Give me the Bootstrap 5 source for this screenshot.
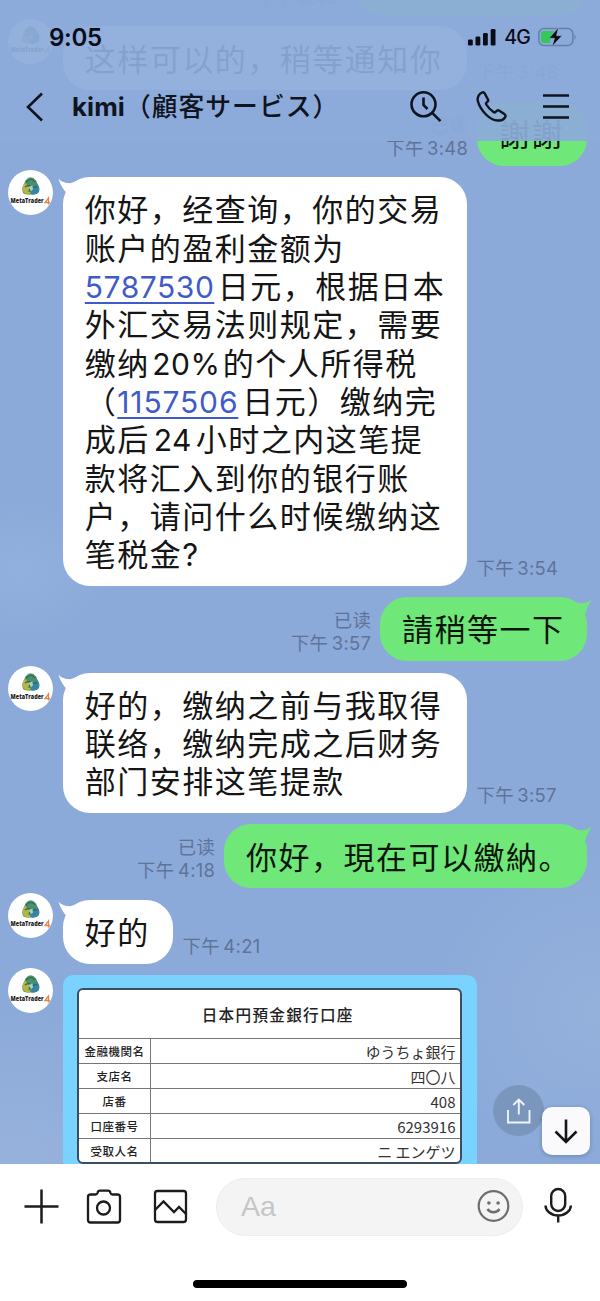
<!DOCTYPE html>
<html lang="zh">
<head>
<meta charset="utf-8">
<meta name="viewport" content="width=device-width, initial-scale=1">
<title>kimi（顧客サービス）</title>
<link href="https://cdn.jsdelivr.net/npm/bootstrap@5.3.0/dist/css/bootstrap.min.css" rel="stylesheet">
<style>
body{width:600px;height:1301px;background:#fff;font-family:Inter,"Noto Sans CJK SC",sans-serif;color:#151515}
svg{display:block;flex:none}
.screen{width:600px;height:1301px}
.chat{height:1164px;background:
 radial-gradient(ellipse 90px 70px at 20px 570px,rgba(150,182,224,.55),transparent),
 radial-gradient(ellipse 150px 160px at 20px 1170px,rgba(156,182,222,.7),transparent),
 radial-gradient(ellipse 170px 160px at 600px 1010px,rgba(154,182,222,.6),transparent),#8caad9}
.feed{margin-top:-49px;gap:11.4px}
.head{height:141px;background:rgba(140,170,217,.935)}
.statusbar{height:74px;padding:0 23px 0 49px}
.clock{font-size:24px;font-weight:600;color:#0a0d18;letter-spacing:-.3px;padding-top:2px}
.net{font-size:19.5px;font-weight:500;color:#0a0d18;letter-spacing:-.8px;padding-top:1px}
.titlebar{height:66px}
.title{font-family:Inter,"Noto Sans CJK JP",sans-serif;font-size:25.8px;color:#101420;font-weight:500;letter-spacing:1px;white-space:nowrap}
.title b{font-weight:700;letter-spacing:.1px}
.in-row{padding-left:62.5px}
.out-row{padding-right:13.3px}
.bubble{border-radius:27px;min-height:64px;font-size:31px;line-height:38.3px;letter-spacing:1.5px;white-space:nowrap;padding:14.3px 0 11.3px 22.3px}
.bubble.in{background:#fff}
.bubble.out{background:#6fe879;color:#0c150c}
.bubble p{margin:0;height:38.3px}
.tail{position:absolute;top:1px}
.in .tail{left:-5px}
.out .tail{right:-5px}
.n{display:inline-block;letter-spacing:.55px;font-size:30px}
.n.link{color:#3f5bc8;text-decoration:underline;text-decoration-thickness:2px;text-underline-offset:4px}
.n.wide{letter-spacing:.85px}
.avatar{position:absolute;left:8px;top:-7px}
.stamp{font-size:18.4px;line-height:23px;color:#5f7399;white-space:nowrap;letter-spacing:.3px;word-spacing:-2px;position:relative}
.in-row .stamp{margin-left:10px;padding-bottom:6px}
.out-row .stamp{margin-right:8.500px;padding-bottom:6px}
.slip{width:414px;height:210px;background:#7ad2ff;border-radius:10px 10px 0 0;padding:12.6px 15px 0 14.5px}
.sheet{height:176px;border:2.5px solid #3b4d60;border-radius:6px;background:#fff;font-family:"Noto Sans CJK JP",sans-serif;color:#222}
.sheet h6{height:48.2px;margin:0;font-size:15.6px;letter-spacing:1.3px;font-weight:500;padding:0 0 0 17px}
.line{border-top:1.3px solid #777;height:24.9px}
.line .k{width:72px;border-right:1.3px solid #777;font-size:11.5px;font-weight:500;letter-spacing:.5px;padding-top:2px}
.line .v{font-size:15px;padding:3px 4px 0 0;color:#333}
.share{position:absolute;left:493px;top:1085px;width:51px;height:51px;background:#7a96bd}
.down{position:absolute;left:542px;top:1107px;width:48px;height:48px;border-radius:10px;background:#fafafc;box-shadow:0 1px 4px rgba(40,60,100,.35)}
.foot{height:137px}
.tools{height:85px;padding-left:24px}
.field{width:307px;height:58px;background:#f4f4f4;border:1px solid #ededed;padding:0 12px 0 24px;margin-left:28px}
.field span{font-family:"Liberation Sans",Arial,sans-serif;font-size:28.5px;color:#c5c6c8}
.homebar{width:214px;height:8px;margin-top:31px}
</style>
</head>
<body>
<svg width="0" height="0" class="position-absolute">
 <symbol id="logo" viewBox="0 0 45 45">
  <circle cx="22.500" cy="22.500" r="22.500" fill="#fff"/>
  <path d="M17.500 10.500Q22.500 4 28 10.500L31 17q1.500 7-5 7.500h-7q-6-.500-4.500-7z" fill="#4c8f69"/>
  <path d="M17 12.500q-4 5-1.500 10 3 3 7 1.500l-1-6z" fill="#b5b545"/>
  <path d="M24 17l5-3q4 4 1.500 8.500-3 3-8 1.500z" fill="#3485a8"/>
  <path d="M18 12q5-5 9 0M17 17q6-4 8 4M21 22q0-6 8-5" fill="none" stroke="#246a55" stroke-width="1.200"/>
  <path d="M20.500 17l4-1.500.5 4.500-2 1z" fill="#a9d0bd"/>
  <text x="2.600" y="33" font-family="Open Sans" font-weight="800" font-size="6.600" textLength="33" lengthAdjust="spacingAndGlyphs" fill="#222">MetaTrader</text>
  <path d="M40.500 34.500v-6.500l-3.500 4.500h5" fill="none" stroke="#e98245" stroke-width="1.300"/>
 </symbol>
 <symbol id="tl" viewBox="0 0 24 18"><path d="M.5.800Q3 4 7.500 4.800T14 4.800Q18 4 23 .800L14 18 8.500 15Q3 9 .5.800Z" fill="#fff"/></symbol>
 <symbol id="tr" viewBox="0 0 24 18"><path d="M23.500 1.500Q21 4.300 16.500 5T10 5Q6 4 1 .800L10 18l7-2Q19 9 23.500 1.500Z" fill="#6fe879"/></symbol>
</svg>
<div class="screen position-relative overflow-hidden">
 <main class="chat overflow-hidden">
  <div class="feed d-flex flex-column">
   <div class="out-row d-flex justify-content-end align-items-end"><div class="stamp me-2 pe-2">下午 3:48</div><div class="bubble out" style="width:232px"></div></div>
   <div class="in-row d-flex align-items-end position-relative"><svg class="avatar" width="45" height="45"><use href="#logo"/></svg><div class="bubble in" style="width:404px">这样可以的，稍等通知你</div><div class="stamp">下午 3:48</div></div>
   <div class="out-row d-flex justify-content-end align-items-end"><div class="stamp text-end">已读<br>下午 3:48</div><div class="bubble out" style="width:110px">謝謝</div></div>
   <div class="in-row d-flex align-items-end position-relative"><svg class="avatar" width="45" height="45"><use href="#logo"/></svg>
    <div class="bubble in position-relative" style="width:404px"><svg class="tail" width="24" height="18"><use href="#tl"/></svg>
     <p>你好，经查询，你的交易</p><p>账户的盈利金额为</p><p><span class="n link" style="width:129px">5787530</span><span class="ps-1">日元，根据日本</span></p><p>外汇交易法则规定，需要</p><p>缴纳<span class="n text-center" style="width:73px">20%</span>的个人所得税</p><p>（<span class="n link wide" style="width:121px">1157506</span><span class="ps-1">日元）缴纳完</span></p><p>成后<span class="n text-center" style="width:46px">24</span>小时之内这笔提</p><p>款将汇入到你的银行账</p><p>户，请问什么时候缴纳这</p><p>笔税金?</p>
    </div><div class="stamp">下午 3:54</div></div>
   <div class="out-row d-flex justify-content-end align-items-end"><div class="stamp text-end">已读<br>下午 3:57</div><div class="bubble out position-relative" style="width:207px"><svg class="tail" width="24" height="18"><use href="#tr"/></svg>請稍等一下</div></div>
   <div class="in-row d-flex align-items-end position-relative"><svg class="avatar" width="45" height="45"><use href="#logo"/></svg>
    <div class="bubble in position-relative" style="width:404px"><svg class="tail" width="24" height="18"><use href="#tl"/></svg><p>好的，缴纳之前与我取得</p><p>联络，缴纳完成之后财务</p><p>部门安排这笔提款</p></div><div class="stamp">下午 3:57</div></div>
   <div class="out-row d-flex justify-content-end align-items-end"><div class="stamp text-end">已读<br>下午 4:18</div><div class="bubble out position-relative" style="width:363px"><svg class="tail" width="24" height="18"><use href="#tr"/></svg>你好，現在可以繳納。</div></div>
   <div class="in-row d-flex align-items-end position-relative"><svg class="avatar" width="45" height="45"><use href="#logo"/></svg>
    <div class="bubble in position-relative" style="width:110px"><svg class="tail" width="24" height="18"><use href="#tl"/></svg>好的</div><div class="stamp">下午 4:21</div></div>
   <div class="in-row position-relative"><svg class="avatar" width="45" height="45"><use href="#logo"/></svg>
    <div class="slip"><div class="sheet overflow-hidden">
     <h6 class="d-flex align-items-center justify-content-center">日本円預金銀行口座</h6>
     <div class="line d-flex"><div class="k d-flex align-items-center justify-content-center">金融機関名</div><div class="v flex-fill d-flex align-items-center justify-content-end">ゆうちょ銀行</div></div>
     <div class="line d-flex"><div class="k d-flex align-items-center justify-content-center">支店名</div><div class="v flex-fill d-flex align-items-center justify-content-end">四〇八</div></div>
     <div class="line d-flex"><div class="k d-flex align-items-center justify-content-center">店番</div><div class="v flex-fill d-flex align-items-center justify-content-end">408</div></div>
     <div class="line d-flex"><div class="k d-flex align-items-center justify-content-center">口座番号</div><div class="v flex-fill d-flex align-items-center justify-content-end">6293916</div></div>
     <div class="line d-flex"><div class="k d-flex align-items-center justify-content-center">受取人名</div><div class="v flex-fill d-flex align-items-center justify-content-end">ニ エンゲツ</div></div>
    </div></div></div>
  </div>
 </main>
 <header class="head position-absolute top-0 start-0 w-100">
  <div class="statusbar d-flex align-items-center"><span class="clock me-auto">9:05</span>
   <svg width="28" height="18" class="me-2" fill="#0a0d18"><rect y="11.500" width="4.800" height="6" rx="1.200"/><rect x="7.500" y="8.500" width="4.800" height="9" rx="1.200"/><rect x="15" y="5" width="4.800" height="12.500" rx="1.200"/><rect x="22.700" y="1" width="4.800" height="16.500" rx="1.200"/></svg>
   <span class="net me-2">4G</span>
   <svg width="39" height="20"><rect x=".8" y="1.500" width="34" height="17" rx="5" fill="none" stroke="#6580ab" stroke-width="1.500"/><path d="M5 4h11l-3 6-1 6H5q-2 0-2-2V6q0-2 2-2z" fill="#35c759"/><path d="M36.500 7q2.500 3 0 6z" fill="#6580ab"/><path d="M20.500.500L11 11.300h5.500L14 19.500 24 8.700h-5.500z" fill="#0a0d18" stroke="#93b1da" stroke-width=".6"/></svg>
  </div>
  <div class="titlebar d-flex align-items-center ps-4">
   <svg width="20" height="30" fill="none" stroke="#101420" stroke-width="2.600"><path d="M18 1.500L4 15l14 13.500"/></svg>
   <span class="title ms-4 ps-1 me-auto"><b>kimi</b>（顧客サービス）</span>
   <svg width="32" height="32" fill="none" stroke="#101420" stroke-width="2.600"><circle cx="13.500" cy="13.300" r="12"/><path d="M22.200 21.800l8.300 8.300M13.500 6.500v7.500l4 4"/></svg>
   <svg width="32" height="32" style="margin-left:34px" fill="none" stroke="#101420" stroke-width="2.400" stroke-linejoin="round"><path d="M6 1.500Q1.200 4 1.700 9.500 3.500 17 10 23.500T22.500 29.500Q26.500 30 29 26.500 30.500 24.500 28 22.800L23 19.500Q21.500 18.800 20.300 20.300 19 22 17.500 21 13 18 10.300 13.500 9.500 12 11.200 11 12.800 9.700 11.800 8.300L8.800 2.500Q7.800.8 6 1.500Z"/></svg>
   <svg width="26" height="28" style="margin-left:35px;margin-right:31.500px" stroke="#101420" stroke-width="2.600"><path d="M0 2.500h26M0 13.500h26M0 24.500h26"/></svg>
  </div>
 </header>
 <div class="share rounded-circle d-flex align-items-center justify-content-center"><svg width="26" height="28" fill="none" stroke="#edf4ff" stroke-width="1.900"><path d="M2 13v12.500h21.500V13M12.800 17.500V2.500M7.300 8L12.800 2.500 18.300 8"/></svg></div>
 <div class="down d-flex align-items-center justify-content-center"><svg width="24" height="26" fill="none" stroke="#151515" stroke-width="2.600"><path d="M12 1.500v22M1.500 13.500L12 24l10.500-10.500"/></svg></div>
 <footer class="foot bg-white">
  <div class="tools d-flex align-items-center">
   <svg width="35" height="35" stroke="#1c1c1c" stroke-width="2.500"><path d="M.5 17.500h34M17.500.500v34"/></svg>
   <svg width="36" height="35" style="margin-left:27px" fill="none" stroke="#1c1c1c" stroke-width="2.300" stroke-linejoin="round"><path d="M4 5.500h5.500q1.500 0 2-1.500.500-2.300 2.500-2.300h8q2 0 2.500 2.300.500 1.500 2 1.500H31.500q2.500 0 2.500 2.500V31q0 2.500-2.500 2.500h-27Q2 33.500 2 31V8q0-2.500 2.500-2.500"/><circle cx="17.500" cy="19" r="6.500"/></svg>
   <svg width="35" height="35" style="margin-left:31px" fill="none" stroke="#1c1c1c" stroke-width="2.300"><rect x="2" y="2" width="31" height="31" rx="2.500"/><path d="M2 21l8.500-8.500 10.500 10.500 5-5 7 7"/></svg>
   <div class="field rounded-pill d-flex align-items-center justify-content-between"><span>Aa</span><svg width="33" height="33" fill="none" stroke="#6e6e6e" stroke-width="2.200"><circle cx="16.500" cy="16" r="14.800"/><path d="M10.500 19q2 3.200 6 3.200t6-3.200" stroke-width="2.400"/><circle cx="11.900" cy="13" r="1.800" fill="#6e6e6e" stroke="none"/><circle cx="21.100" cy="13" r="1.800" fill="#6e6e6e" stroke="none"/></svg></div>
   <svg width="28" height="36" style="margin-left:21px;margin-top:-3px" fill="none" stroke="#1c1c1c" stroke-width="2.400"><rect x="7.200" y="2" width="14" height="22" rx="7"/><path d="M1.500 18.500q0 4 3.800 7t8.900 3 8.900-3 3.800-7M14.200 28.500v7"/></svg>
  </div>
  <div class="homebar bg-black rounded-pill mx-auto"></div>
 </footer>
</div>
<script src="https://cdn.jsdelivr.net/npm/bootstrap@5.3.0/dist/js/bootstrap.bundle.min.js"></script>
</body>
</html>
